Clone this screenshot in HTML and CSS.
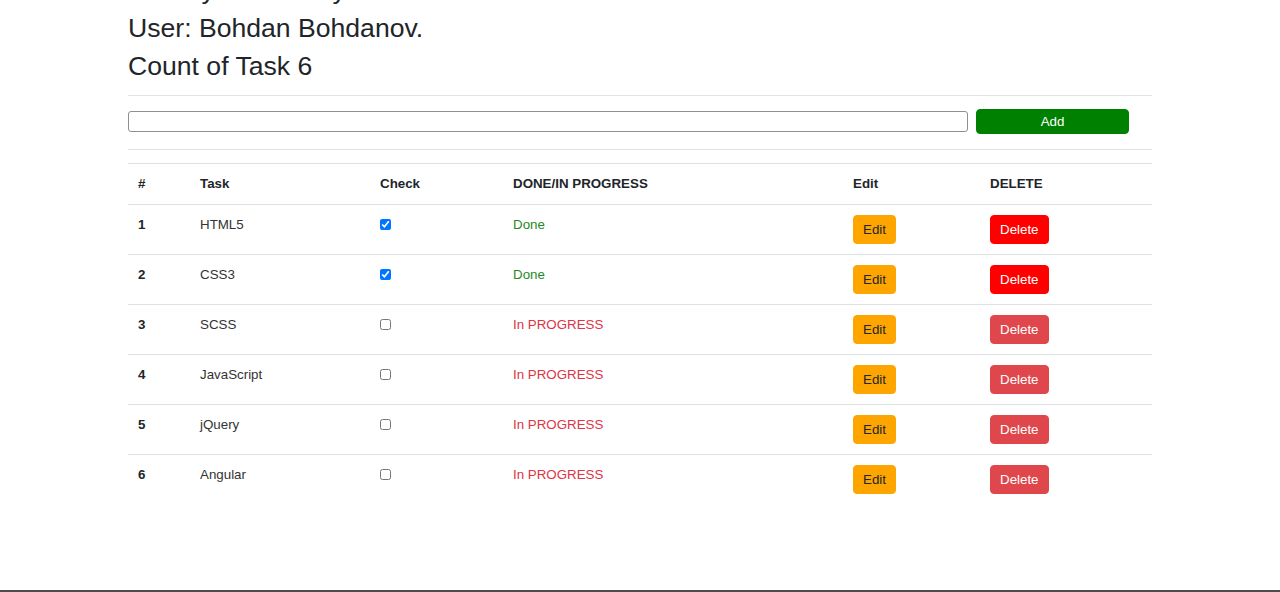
FILE: index.html
```html
<!DOCTYPE html>
<html lang="en">
<head>
<meta charset="utf-8">
<title>Tasks</title>
<link rel="stylesheet" href="styles.css">
</head>
<body>
<div class="page">
  <main class="container">
    <header class="info">
      <div class="info-line">Weekly Task Diary</div>
      <div class="info-line">User: Bohdan Bohdanov.</div>
      <div class="info-line">Count of Task 6</div>
    </header>
    <hr class="rule rule-top">
    <form class="add-form">
      <input class="add-input" type="text">
      <button class="add-btn" type="button">Add</button>
    </form>
    <hr class="rule rule-bottom">
    <table class="tasks">
      <colgroup>
        <col class="c-num"><col class="c-task"><col class="c-check"><col class="c-state"><col class="c-edit"><col class="c-del">
      </colgroup>
      <thead>
        <tr><th>#</th><th>Task</th><th>Check</th><th>DONE/IN PROGRESS</th><th>Edit</th><th>DELETE</th></tr>
      </thead>
      <tbody>
        <tr><th>1</th><td>HTML5</td><td><input class="chk" type="checkbox" checked></td><td class="done">Done</td><td><button class="btn btn-edit" type="button">Edit</button></td><td><button class="btn btn-del" type="button">Delete</button></td></tr>
        <tr><th>2</th><td>CSS3</td><td><input class="chk" type="checkbox" checked></td><td class="done">Done</td><td><button class="btn btn-edit" type="button">Edit</button></td><td><button class="btn btn-del" type="button">Delete</button></td></tr>
        <tr><th>3</th><td>SCSS</td><td><input class="chk" type="checkbox"></td><td class="progress">In PROGRESS</td><td><button class="btn btn-edit" type="button">Edit</button></td><td><button class="btn btn-del btn-del-soft" type="button">Delete</button></td></tr>
        <tr><th>4</th><td>JavaScript</td><td><input class="chk" type="checkbox"></td><td class="progress">In PROGRESS</td><td><button class="btn btn-edit" type="button">Edit</button></td><td><button class="btn btn-del btn-del-soft" type="button">Delete</button></td></tr>
        <tr><th>5</th><td>jQuery</td><td><input class="chk" type="checkbox"></td><td class="progress">In PROGRESS</td><td><button class="btn btn-edit" type="button">Edit</button></td><td><button class="btn btn-del btn-del-soft" type="button">Delete</button></td></tr>
        <tr><th>6</th><td>Angular</td><td><input class="chk" type="checkbox"></td><td class="progress">In PROGRESS</td><td><button class="btn btn-edit" type="button">Edit</button></td><td><button class="btn btn-del btn-del-soft" type="button">Delete</button></td></tr>
      </tbody>
    </table>
  </main>
  <div class="bottom-bar"></div>
</div>
</body>
</html>
```
FILE: styles.css
```css
* { box-sizing: border-box; }
html, body { margin: 0; padding: 0; }
body {
  font-family: "Liberation Sans", Arial, sans-serif;
  font-size: 13.33px;
  line-height: 1.5;
  color: #212529;
  background: #fff;
}
.page {
  height: 100vh;
  display: flex;
  flex-direction: column;
  overflow: hidden;
}
.container {
  flex: 1;
  width: 1024px;
  margin: 0 auto;
}
.info {
  margin-top: -29px;
}
.info-line {
  font-size: 26.6px;
  line-height: 38px;
  color: #212529;
}
.rule {
  border: 0;
  border-top: 1px solid #e2e2e2;
  margin: 0;
}
.rule-top { margin-top: 10px; margin-bottom: 13px; }
.rule-bottom { margin-top: 15px; margin-bottom: 13px; }
.add-form {
  display: flex;
  align-items: center;
  gap: 8px;
  margin: 0;
}
.add-input {
  flex: 0 0 840px;
  height: 21px;
  border: 1px solid #8f8f8f;
  border-radius: 3px;
  padding: 1px 4px;
  font: inherit;
}
.add-btn {
  flex: 0 0 153px;
  height: 25px;
  background: #008000;
  color: #fff;
  border: 1px solid #008000;
  border-radius: 4px;
  font-family: inherit;
  font-size: 13.33px;
  padding: 0;
}
.tasks {
  width: 100%;
  border-collapse: collapse;
  color: #212529;
}
.c-num { width: 62px; }
.c-task { width: 180px; }
.c-check { width: 133px; }
.c-state { width: 340px; }
.c-edit { width: 137px; }
.c-del { width: 172px; }
.tasks th, .tasks td {
  padding: 10px;
  text-align: left;
  vertical-align: top;
  border-top: 1px solid #dee2e6;
  line-height: 20px;
}
.tasks thead th {
  border-bottom: 1px solid #dee2e6;
  font-weight: bold;
}
.tasks tbody th { font-weight: bold; }
.tasks tbody td { color: #333; }
.chk {
  margin: 4px 0 0 0;
  width: 11px;
  height: 11px;
  vertical-align: top;
}
.tasks td.done { color: #1f8a1f; }
.tasks td.progress { color: #dc3545; }
.btn {
  height: 29px;
  padding: 0 9px;
  border-radius: 4px;
  font-family: inherit;
  font-size: 13.33px;
  line-height: 27px;
  vertical-align: top;
}
.btn-edit {
  background: #ffa500;
  border: 1px solid #ffa500;
  color: #212529;
}
.btn-del {
  background: #ff0000;
  border: 1px solid #ff0000;
  color: #fff;
}
.btn-del-soft {
  background: #e0474c;
  border-color: #e0474c;
}
.bottom-bar {
  height: 2px;
  background: #4d4d4d;
  flex: 0 0 2px;
}
```
